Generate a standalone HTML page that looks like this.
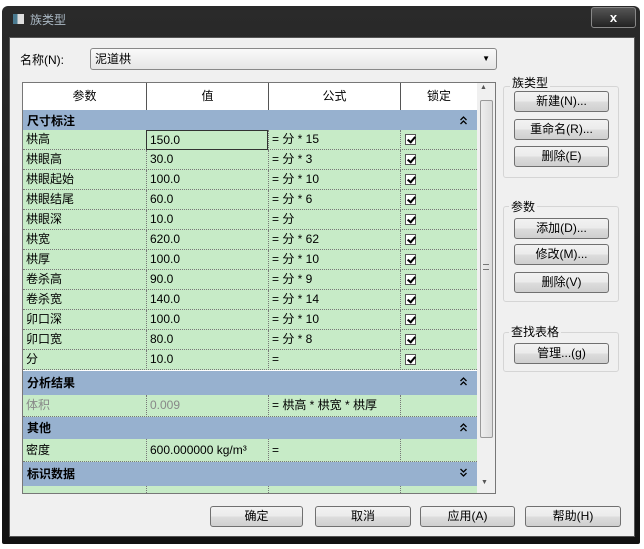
<!DOCTYPE html><html><head><meta charset="utf-8"><style>
*{margin:0;padding:0;box-sizing:border-box}
body{width:644px;height:549px;background:#fff;position:relative;overflow:hidden;font-family:"Liberation Sans","Noto Sans CJK SC",sans-serif;font-size:12px;color:#000}
.a{position:absolute}
.frame{left:2px;top:6px;width:638px;height:538px;background:linear-gradient(#2a2a2a,#111);border-radius:6px 6px 2px 2px}
.body{left:9px;top:37px;width:626px;height:500px;background:#f0f0f0;border:1px solid #555}
.btn{position:absolute;height:21px;border:1px solid #707070;border-radius:3px;background:linear-gradient(#f2f2f2 0%,#ebebeb 50%,#dddddd 51%,#cfcfcf 100%);text-align:center;line-height:19px;font-size:12px}
.grp{position:absolute;border:1px solid #d5d5d5;border-radius:3px}
.row{position:absolute;left:23px;width:454px;height:20px;background:#c7ebc7;border-bottom:1px dotted #777;line-height:19px}
.sec{position:absolute;left:23px;width:454px;height:22px;background:#97b1cf;font-weight:bold;line-height:22px;padding-left:4px}
.sec svg{position:absolute;right:10px;top:6px}
.c{position:absolute;top:0;height:20px;padding-left:3px;white-space:nowrap}
.c1{left:0;width:123px}
.c2{left:123px;width:122px;border-left:1px dotted #777}
.c3{left:245px;width:132px;border-left:1px dotted #777}
.c4{left:377px;width:77px;border-left:1px dotted #777}
.cb{position:absolute;left:4px;top:4px;width:11px;height:11px;border:1px solid #555;background:#fff}
.cb:after{content:"";position:absolute;left:3px;top:0px;width:3px;height:6px;border:solid #000;border-width:0 2px 2px 0;transform:rotate(40deg)}
.hd{position:absolute;top:0;height:27px;line-height:26px;text-align:center;border-right:1px solid #555;background:#fff}
</style></head><body>
<div class="a frame"></div>
<div class="a" style="left:13px;top:14px;width:11px;height:10px;background:linear-gradient(90deg,#4a7a90 40%,#ddd 40%)"></div>
<div class="a" style="left:30px;top:11px;color:#aab8c4;font-size:12px">族类型</div>
<div class="a" style="left:591px;top:7px;width:45px;height:21px;border:1px solid #888;border-radius:3px;background:linear-gradient(#555,#222);color:#fff;text-align:center;font-weight:bold;line-height:19px;font-size:13px">x</div>
<div class="a body"></div>
<div class="a" style="left:20px;top:51px">名称(N):</div>
<div class="a" style="left:90px;top:48px;width:407px;height:22px;border:1px solid #888;border-radius:3px;background:linear-gradient(#fafafa,#e6e6e6);padding-left:4px;line-height:20px">泥道栱<span style="position:absolute;right:6px;font-size:8px">▼</span></div>

<div class="a" style="left:22px;top:82px;width:474px;height:412px;border:1px solid #777;background:#fff"></div>
<div class="a" style="left:23px;top:83px;width:454px;height:27px;border-bottom:1px solid #555">
<div class="hd" style="left:0;width:124px">参数</div><div class="hd" style="left:124px;width:122px">值</div><div class="hd" style="left:246px;width:132px">公式</div><div class="hd" style="left:378px;width:76px;border-right:none">锁定</div></div>
<div class="a" style="left:477px;top:83px;width:18px;height:410px;background:#f0f0f0"></div>
<div class="a" style="left:480px;top:84px;font-size:7px;color:#555">▲</div>
<div class="a" style="left:480px;top:100px;width:13px;height:338px;border:1px solid #999;border-radius:2px;background:linear-gradient(90deg,#eee,#ddd)"></div>
<div class="a" style="left:483px;top:264px;width:6px;height:6px;border-top:1px solid #777;border-bottom:1px solid #777"></div>
<div class="a" style="left:481px;top:479px;font-size:7px;color:#555">▼</div>

<div class="sec" style="top:110px">尺寸标注<svg width="7" height="9"><path d="M0.5 4L3.5 1 6.5 4M0.5 8L3.5 5 6.5 8" fill="none" stroke="#000" stroke-width="1.3"/></svg></div>
<div class="row" style="top:130px"><div class="c c1">栱高</div><div class="c c2" style="border:1px solid #333;height:20px">150.0</div><div class="c c3">= 分 * 15</div><div class="c c4"><div class="cb"></div></div></div>
<div class="row" style="top:150px"><div class="c c1">栱眼高</div><div class="c c2">30.0</div><div class="c c3">= 分 * 3</div><div class="c c4"><div class="cb"></div></div></div>
<div class="row" style="top:170px"><div class="c c1">栱眼起始</div><div class="c c2">100.0</div><div class="c c3">= 分 * 10</div><div class="c c4"><div class="cb"></div></div></div>
<div class="row" style="top:190px"><div class="c c1">栱眼结尾</div><div class="c c2">60.0</div><div class="c c3">= 分 * 6</div><div class="c c4"><div class="cb"></div></div></div>
<div class="row" style="top:210px"><div class="c c1">栱眼深</div><div class="c c2">10.0</div><div class="c c3">= 分</div><div class="c c4"><div class="cb"></div></div></div>
<div class="row" style="top:230px"><div class="c c1">栱宽</div><div class="c c2">620.0</div><div class="c c3">= 分 * 62</div><div class="c c4"><div class="cb"></div></div></div>
<div class="row" style="top:250px"><div class="c c1">栱厚</div><div class="c c2">100.0</div><div class="c c3">= 分 * 10</div><div class="c c4"><div class="cb"></div></div></div>
<div class="row" style="top:270px"><div class="c c1">卷杀高</div><div class="c c2">90.0</div><div class="c c3">= 分 * 9</div><div class="c c4"><div class="cb"></div></div></div>
<div class="row" style="top:290px"><div class="c c1">卷杀宽</div><div class="c c2">140.0</div><div class="c c3">= 分 * 14</div><div class="c c4"><div class="cb"></div></div></div>
<div class="row" style="top:310px"><div class="c c1">卯口深</div><div class="c c2">100.0</div><div class="c c3">= 分 * 10</div><div class="c c4"><div class="cb"></div></div></div>
<div class="row" style="top:330px"><div class="c c1">卯口宽</div><div class="c c2">80.0</div><div class="c c3">= 分 * 8</div><div class="c c4"><div class="cb"></div></div></div>
<div class="row" style="top:350px"><div class="c c1">分</div><div class="c c2">10.0</div><div class="c c3">=</div><div class="c c4"><div class="cb"></div></div></div>
<div class="sec" style="top:371px;height:24px;line-height:24px">分析结果<svg width="7" height="9"><path d="M0.5 4L3.5 1 6.5 4M0.5 8L3.5 5 6.5 8" fill="none" stroke="#000" stroke-width="1.3"/></svg></div>
<div class="row" style="top:395px;height:22px;line-height:21px"><div class="c c1" style="color:#888">体积</div><div class="c c2" style="color:#888;height:22px">0.009</div><div class="c c3" style="height:22px">= 栱高 * 栱宽 * 栱厚</div><div class="c c4" style="height:22px"></div></div>
<div class="sec" style="top:417px">其他<svg width="7" height="9"><path d="M0.5 4L3.5 1 6.5 4M0.5 8L3.5 5 6.5 8" fill="none" stroke="#000" stroke-width="1.3"/></svg></div>
<div class="row" style="top:439px;height:23px;line-height:22px"><div class="c c1">密度</div><div class="c c2" style="height:23px">600.000000 kg/m³</div><div class="c c3" style="height:23px">=</div><div class="c c4" style="height:23px"></div></div>
<div class="sec" style="top:462px;height:24px;line-height:24px">标识数据<svg width="7" height="9"><path d="M0.5 1L3.5 4 6.5 1M0.5 5L3.5 8 6.5 5" fill="none" stroke="#000" stroke-width="1.3"/></svg></div>
<div class="row" style="top:486px;height:7px;border:none"><div class="c c1" style="height:7px"></div><div class="c c2" style="height:7px"></div><div class="c c3" style="height:7px"></div><div class="c c4" style="height:7px"></div></div>

<div class="grp" style="left:503px;top:86px;width:116px;height:92px"></div>
<div class="a" style="left:510px;top:74px;background:#f0f0f0;padding:0 2px">族类型</div>
<div class="btn" style="left:514px;top:91px;width:95px">新建(N)...</div>
<div class="btn" style="left:514px;top:119px;width:95px">重命名(R)...</div>
<div class="btn" style="left:514px;top:146px;width:95px">删除(E)</div>
<div class="grp" style="left:503px;top:206px;width:116px;height:96px"></div>
<div class="a" style="left:509px;top:198px;background:#f0f0f0;padding:0 2px">参数</div>
<div class="btn" style="left:514px;top:218px;width:95px">添加(D)...</div>
<div class="btn" style="left:514px;top:244px;width:95px">修改(M)...</div>
<div class="btn" style="left:514px;top:272px;width:95px">删除(V)</div>
<div class="grp" style="left:503px;top:332px;width:116px;height:40px"></div>
<div class="a" style="left:509px;top:323px;background:#f0f0f0;padding:0 2px">查找表格</div>
<div class="btn" style="left:514px;top:343px;width:95px">管理...(g)</div>

<div class="btn" style="left:210px;top:506px;width:93px">确定</div>
<div class="btn" style="left:315px;top:506px;width:96px">取消</div>
<div class="btn" style="left:420px;top:506px;width:95px">应用(A)</div>
<div class="btn" style="left:525px;top:506px;width:96px">帮助(H)</div>
</body></html>
